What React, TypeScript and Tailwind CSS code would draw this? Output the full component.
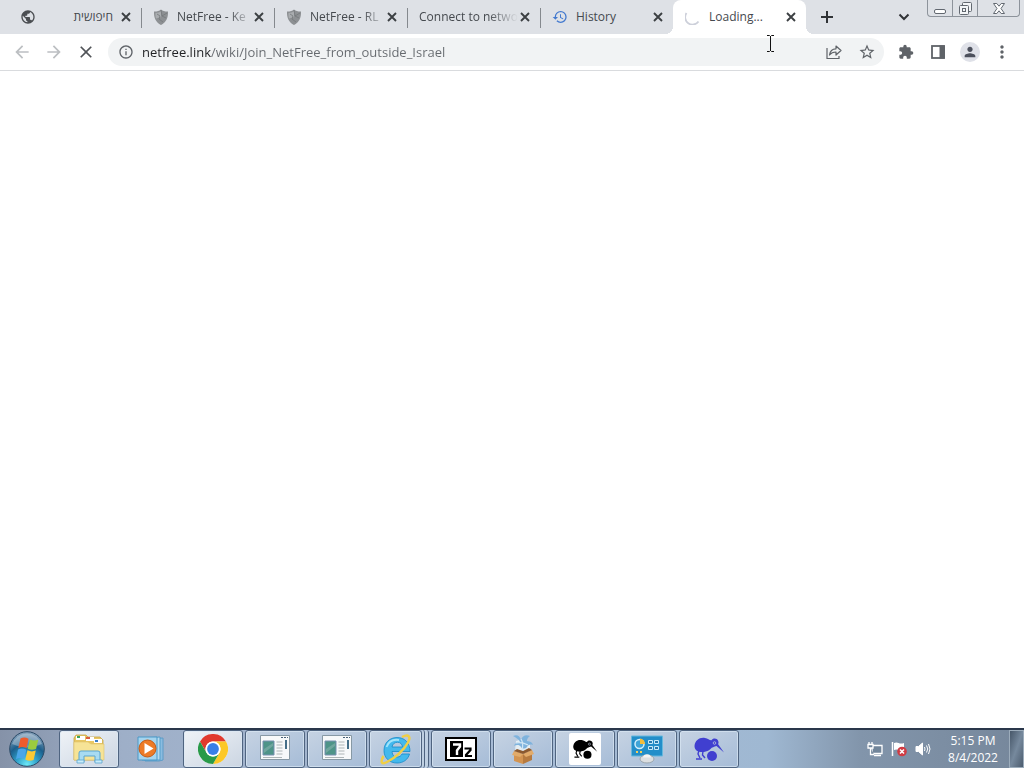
import React from "react";
import {
    MdArrowBack,
    MdArrowForward,
    MdClose,
    MdExtension,
    MdHistory,
    MdInfoOutline,
    MdMoreVert,
    MdPerson,
    MdPublic,
    MdStarBorder,
} from "react-icons/md";

interface TabInfo {
    id: number;
    title: string;
    icon?: React.ReactNode;
    rtl?: boolean;
    active?: boolean;
    divider?: boolean;
    fade?: boolean;
}

const ShieldIcon = () => (
    <svg viewBox="0 0 16 16" className="h-4 w-4">
        <path d="M1 2.500C4 2.600 6 2 8 .500c2 1.500 4 2.100 7 2C15.300 9 13 13.500 8 16 3 13.500.7 9 1 2.500z" fill="#8d9093" />
        <path d="M2.500 4C5 4 6.500 3.300 8 2.300V8L3 9.500C2.500 8 2.400 6 2.500 4z" fill="#a9acaf" />
        <path d="M4 5l3 2-1 3 4 3M14 4L9 7l4 2M8 1l1 6" fill="none" stroke="#75787b" strokeWidth=".8" />
    </svg>
);

const SpinnerIcon = () => (
    <svg viewBox="0 0 16 16" className="h-4 w-4">
        <path d="M1.500 4A7 7 0 0 0 13.500 12.500" fill="none" stroke="#cdd0da" strokeWidth="1.800" />
    </svg>
);

const CrossIcon = () => (
    <svg viewBox="0 0 14 14" className="h-3.5 w-3.5">
        <path d="M3 3l8 8M11 3l-8 8" fill="none" stroke="#3c4043" strokeWidth="1.900" />
    </svg>
);

const tabs: TabInfo[] = [
    { id: 1, title: "חיפושית", icon: <MdPublic className="h-4 w-4 text-[#4b4e52]" />, rtl: true, divider: true },
    { id: 2, title: "NetFree - Ke", icon: <ShieldIcon />, divider: true, fade: true },
    { id: 3, title: "NetFree - RL", icon: <ShieldIcon />, divider: true, fade: true },
    { id: 4, title: "Connect to netwo", divider: true, fade: true },
    { id: 5, title: "History", icon: <MdHistory className="h-4 w-4 text-[#4279cf]" /> },
    { id: 6, title: "Loading...", icon: <SpinnerIcon />, active: true },
];

const Tab = ({ tab }: { tab: TabInfo }) => (
    <div
        className={`relative flex h-[34px] w-[133px] min-w-0 items-center pl-3 pr-2 ${
            tab.active ? "rounded-t-lg bg-white" : ""
        }`}
    >
        <button role="tab" aria-selected={!!tab.active} className="flex h-full min-w-0 flex-1 items-center gap-2">
            {tab.icon && <span className="shrink-0">{tab.icon}</span>}
            <span
                dir={tab.rtl ? "rtl" : "ltr"}
                className={`min-w-0 flex-1 overflow-hidden whitespace-nowrap text-start ${tab.rtl ? "pr-1.5" : ""} ${
                    tab.fade ? "[mask-image:linear-gradient(90deg,#000_70%,transparent)]" : ""
                }`}
            >
                {tab.title}
            </span>
        </button>
        <button aria-label={`Close ${tab.title}`} className="shrink-0">
            <CrossIcon />
        </button>
        {tab.divider && <span className="absolute -right-px top-2 h-5 w-px bg-[#85898e]" />}
        {tab.active && (
            <>
                <span className="absolute -left-2 bottom-0 h-2 w-2 bg-[radial-gradient(circle_at_0_0,transparent_8px,#fff_8px)]" />
                <span className="absolute -right-2 bottom-0 h-2 w-2 bg-[radial-gradient(circle_at_100%_0,transparent_8px,#fff_8px)]" />
            </>
        )}
    </div>
);

const WindowControls = () => (
    <div className="mr-1 flex h-[17px] self-start rounded-b border border-t-0 border-[#8d939b] text-[#626870]">
        <button aria-label="Minimize" className="flex w-[25px] items-center justify-center border-r border-[#8d939b]">
            <svg viewBox="0 0 12 12" className="h-3 w-3" fill="#fff" stroke="currentColor">
                <rect x=".5" y="7.500" width="11" height="4" rx="1.500" />
            </svg>
        </button>
        <button aria-label="Restore" className="flex w-[25px] items-center justify-center border-r border-[#8d939b]">
            <svg viewBox="0 0 13 13" className="h-[13px] w-[13px]" fill="#f3f5f7" stroke="currentColor">
                <rect x="3.500" y=".5" width="9" height="9" rx="1" />
                <rect x=".5" y="3.500" width="9" height="9" rx="1" />
                <rect x="3.500" y="6.500" width="3" height="3" />
            </svg>
        </button>
        <button aria-label="Close window" className="flex w-[41px] items-center justify-center">
            <svg viewBox="0 0 12 11" className="h-[11px] w-3" fill="#fff" stroke="currentColor">
                <path d="M.5.5h3.300L6 3.200 8.200.5h3.300L8 5.500l3.500 5H8.200L6 7.800 3.800 10.500H.5L4 5.500z" />
            </svg>
        </button>
    </div>
);

const TabStrip = () => (
    <div className="flex items-center bg-[#dee1e6] pl-2 text-xs text-[#45494e]">
        <div role="tablist" className="flex min-w-0">
            {tabs.map((tab) => (
                <Tab key={tab.id} tab={tab} />
            ))}
        </div>
        <button aria-label="New tab" className="ml-3 shrink-0">
            <svg viewBox="0 0 18 18" className="h-[18px] w-[18px]">
                <path d="M9 3v12M3 9h12" stroke="#303336" strokeWidth="2" />
            </svg>
        </button>
        <button aria-label="Search tabs" className="ml-auto mr-3.5 shrink-0">
            <svg viewBox="0 0 18 18" className="h-[18px] w-[18px]">
                <path d="M4.500 6.500L9 11l4.500-4.500" fill="none" stroke="#303336" strokeWidth="2" />
            </svg>
        </button>
        <WindowControls />
    </div>
);

const ShareIcon = () => (
    <svg viewBox="0 0 16 16" className="h-4 w-4" fill="none" stroke="#5f6368" strokeWidth="1.200">
        <path d="M1 4v10.500h12V12" />
        <path d="M3.500 11C4 7 6 4.800 10 4.800V2l5 4.500-5 4.500V8C7 8 5 9 3.500 11z" strokeLinejoin="round" />
    </svg>
);

const Toolbar = () => (
    <div className="flex h-[37px] items-center border-b border-[#d9dbde] bg-white text-[#5f6368]">
        <div className="flex gap-3 pl-3">
            <button aria-label="Back">
                <MdArrowBack className="h-5 w-5 text-[#bcbfc2]" />
            </button>
            <button aria-label="Forward">
                <MdArrowForward className="h-5 w-5 text-[#bcbfc2]" />
            </button>
            <button aria-label="Stop">
                <MdClose className="h-5 w-5 text-[#505357]" />
            </button>
        </div>
        <div className="ml-3 flex h-7 min-w-0 flex-1 items-center rounded-full bg-[#f1f3f4] pl-2.5 pr-2">
            <button aria-label="View site information">
                <MdInfoOutline className="h-4 w-4" />
            </button>
            {/* host is darker than the path */}
            <input
                aria-label="Address"
                type="text"
                defaultValue="netfree.link/wiki/Join_NetFree_from_outside_Israel"
                className="ml-2 min-w-0 flex-1 bg-[linear-gradient(90deg,#202124_69px,#65696e_69px)] bg-clip-text pt-0.5 text-[13px] text-transparent caret-black outline-none"
            />
            <button aria-label="Share this page" className="mr-4">
                <ShareIcon />
            </button>
            <button aria-label="Bookmark this page">
                <MdStarBorder className="h-[18px] w-[18px]" />
            </button>
        </div>
        <div className="ml-3.5 mr-3 flex items-center gap-3">
            <button aria-label="Extensions">
                <MdExtension className="h-4 w-4" />
            </button>
            <button aria-label="Side panel" className="ml-0.5 flex w-5 justify-center">
                <svg viewBox="0 0 16 16" className="h-4 w-4">
                    <rect x="2" y="2" width="12" height="12" fill="none" stroke="#5f6368" strokeWidth="1.800" />
                    <path d="M9.500 1.500H15v13H9.500z" fill="#5f6368" />
                </svg>
            </button>
            <button aria-label="Profile" className="flex h-5 w-5 items-center justify-center rounded-full bg-[#dfe1e8]">
                <MdPerson className="h-4 w-4 text-[#4c505c]" />
            </button>
            <button aria-label="Menu">
                <MdMoreVert className="h-5 w-5" />
            </button>
        </div>
    </div>
);

const StartOrb = () => (
    <svg viewBox="0 0 36 36" className="h-9 w-9">
        <defs>
            <radialGradient id="orb" cx=".5" cy=".95" r=".9">
                <stop offset="0" stopColor="#6ceaf8" />
                <stop offset=".35" stopColor="#2f9fc8" />
                <stop offset=".65" stopColor="#1c5f8c" />
                <stop offset="1" stopColor="#7f9db8" />
            </radialGradient>
        </defs>
        <circle cx="18" cy="18" r="17.300" fill="url(#orb)" stroke="#2c4a66" />
        <path d="M3 13A16 16 0 0 1 33 13Q18 20 3 13z" fill="#fff" opacity=".3" />
        <path d="M11.500 7.500q4-2 8 .3L17.600 17q-4-2-8.300.2z" fill="#ee5b2d" />
        <path d="M21 8.500q4 2 8.300.3L27 18q-4.500 1.700-8.300-.3z" fill="#9bcb3e" />
        <path d="M9 18.500q4-2 8.300.2L15.200 28q-4-2-8.200.2z" fill="#4aa6e8" />
        <path d="M18.500 19.300q4 2 8.300.3L24.600 29q-4.500 1.700-8.300-.5z" fill="#fbc934" />
    </svg>
);

const FolderIcon = () => (
    <svg viewBox="0 0 34 32" className="h-8 w-[34px]">
        <path d="M2 27V5l2-3h10l2 2h12l3 3v20z" fill="#e8c763" stroke="#c5a548" strokeWidth=".8" />
        <path d="M4 3h9v4H4zM14 4h8v4h-8zM22 6h8v4h-8z" fill="#fff" />
        <path d="M5 3h3v2H5z" fill="#39a35b" />
        <path d="M14 4h4v2h-4z" fill="#d95b40" />
        <path d="M23 7h3v2h-3z" fill="#3d80c8" />
        <path d="M2 9h14l3 2h13v16H2z" fill="#f6e396" stroke="#dfc36b" strokeWidth=".6" />
        <path d="M7 29V20q0-2 2-2h17q2 0 2 2v9h-5v-6H12v6z" fill="#a8dbf2" stroke="#5ba5cf" />
        <path d="M5 27h7v3H5zM23 27h7v3h-7z" fill="#c9edfa" stroke="#5ba5cf" strokeWidth=".8" />
    </svg>
);

const MediaIcon = () => (
    <svg viewBox="0 0 28 26" className="h-[26px] w-7">
        <path d="M8 3l18-1v22l-4 1H8z" fill="#8bbce0" stroke="#5d9cc8" />
        <path d="M5 2l18-1v23H5z" fill="#b5dbf0" stroke="#559dca" />
        <path d="M1 1h19v23H1z" fill="#a5d4ee" stroke="#4b98c7" />
        <circle cx="10.500" cy="12.500" r="8.500" fill="#ed7b27" stroke="#c55a13" />
        <path d="M7.500 7v11l9-5.500z" fill="#fff" />
    </svg>
);

const ChromeIcon = () => (
    <svg viewBox="0 0 30 30" className="h-[30px] w-[30px]">
        <circle cx="15" cy="15" r="15" fill="#fff" />
        <path d="M2 7.500A15 15 0 0 1 28 7.500H15A7.500 7.500 0 0 0 8.500 18.750z" fill="#e1392d" />
        <path d="M28 7.500A15 15 0 0 1 15 30L21.500 18.750A7.500 7.500 0 0 0 15 7.500z" fill="#fcc827" />
        <path d="M15 30A15 15 0 0 1 2 7.500L8.500 18.750A7.500 7.500 0 0 0 21.500 18.750z" fill="#299a49" />
        <circle cx="15" cy="15" r="7.500" fill="#fff" />
        <circle cx="15" cy="15" r="5.900" fill="#397fe8" />
    </svg>
);

const AppWindowIcon = () => (
    <svg viewBox="0 0 30 26" className="mb-0.5 h-[26px] w-[30px]">
        <path d="M.5.500h29v24H.5z" fill="#f7f9fa" stroke="#8799a5" />
        <path d="M3 6h11v14H3z" fill="#4e9488" stroke="#7990b1" />
        <path d="M4 14l9-6v3l-9 7z" fill="#70a69e" />
        <path d="M16.500 7h6M16.500 10h6M16.500 13h6M16.500 16h6M16.500 19h6M3 22.500h19" stroke="#aeb5b7" />
        <path d="M21 2.500h2M24 2.500h2M27 2.500h1" stroke="#476077" />
        <path d="M25 5h2v9h-2z" fill="#456f89" />
    </svg>
);

const ExplorerIcon = () => (
    <svg viewBox="0 0 32 32" className="h-8 w-8">
        <path
            d="M29.500 21C28 26.500 23.500 30 17 30 9.500 30 4 25 4 17.500S9.500 4.500 17 4.500 30 9.500 30 18.500H12c.5 4 2 5.500 5.500 5.500 2 0 3.500-1 4.500-3zM12 14h10.500c-.3-3-2-4.700-5-4.700S12.500 11 12 14z"
            fill="#43b9ed"
            stroke="#168ac8"
            strokeWidth=".8"
        />
        <path d="M6.500 14C8.500 8.500 13 6 19 7" fill="none" stroke="#a2e4fa" strokeWidth="1.800" />
        <path
            d="M3.500 23C0 29 1.500 32 7 29c8-4 17-12 21-19.500C31 4 29 .5 22 4"
            fill="none"
            stroke="#f0cf45"
            strokeWidth="2.500"
        />
    </svg>
);

const SevenZipIcon = () => (
    <svg viewBox="0 0 32 24" className="h-6 w-8">
        <path d="M1 1h30v22H1z" fill="#fff" stroke="#000" strokeWidth="2" />
        <path d="M5 4h13v16H5z" fill="#000" />
        <path d="M8 7.500h7v2l-3 4V18" fill="none" stroke="#fff" strokeWidth="2.400" />
        <path d="M19.500 11.500h6v1.500L21 18v1h6" fill="none" stroke="#000" strokeWidth="2.200" />
    </svg>
);

const BoxIcon = () => (
    <svg viewBox="0 0 24 32" className="h-8 w-6">
        <path d="M5 8l7-2 7 3v10l-7 2-8-3z" fill="#e4edf3" />
        <path d="M2 3c4-2 7 0 8 4 1-4 5-6 9-4-2 1-3 3-3 5 3 0 5 1 6 4-3-1-5 0-6 2-2 2-5 2-6 0-2-3-5-2-7-1 1-3 3-4 6-4-1-3-4-4-7-6z" fill="#7fb3dd" />
        <path d="M10 6c2 3 2 7 1 11M5 10c4-1 8 0 12 2" fill="none" stroke="#d3e7f5" strokeWidth="1.200" />
        <path d="M3 18l9 3v10l-9-3z" fill="#d39451" />
        <path d="M12 21l9-4v10l-9 4z" fill="#b67a3f" />
        <path d="M3 18l9 3-3 3-8-2zM12 21l9-4 2 4-8 3z" fill="#e2ab6a" />
        <path d="M3 18l3-2 6 2 6-3 3 2-9 4z" fill="#8b592f" />
    </svg>
);

const Kiwi = ({ className }: { className: string }) => (
    <svg viewBox="0 0 32 26" className={className}>
        <path
            d="M1.500 10C2 4 7 1 12 2c3 .6 4.500 2.500 6.500 2.300C20 1.500 25 2 25.500 6c0 1 0 1.600-.5 2L31 16.500 23.500 10C21 11 19 11 17.500 13c-2 2-4 2.500-6.500 3-5 .5-9.500-1-9.500-6z"
            fill="currentColor"
        />
        <path
            d="M6 14l-1 4 2 4M3 23h6M10 15l-.500 4 2.500 3"
            fill="none"
            stroke="currentColor"
            strokeWidth="1.400"
        />
        <circle cx="19" cy="20" r="5" fill="currentColor" />
        <circle cx="21.500" cy="7" r="1.300" fill="none" stroke="#c4cbe0" strokeWidth=".7" />
    </svg>
);

const ControlPanelIcon = () => (
    <svg viewBox="0 0 32 30" className="h-[30px] w-8">
        <path d="M.5 2h31v20H.5z" fill="#238ec9" stroke="#66b8dd" />
        <circle cx="8.500" cy="10" r="4.500" fill="#3fa4d7" stroke="#d3effb" strokeWidth="1.500" />
        <path d="M9 10V4.500a5.500 5.500 0 0 1 5 5.500z" fill="#f5bd3a" />
        <path d="M17.500 6.500h4v3h-4zM23.500 6.500h4v3h-4zM17.500 12.500h4v3h-4zM23.500 12.500h4v3h-4z" fill="#2779ad" stroke="#c6eafa" />
        <path d="M5 18h2M9 18h2" stroke="#f5cf56" strokeWidth="2" />
        <ellipse cx="16" cy="25" rx="7" ry="4" fill="#dcdfe1" stroke="#9ba6ad" />
        <path d="M12 23.500c0-4.500 8-4.500 8 0z" fill="#f4f4f4" />
    </svg>
);

interface AppButton {
    label: string;
    icon: React.ReactNode;
    look?: "bright" | "plain" | "stacked";
}

const apps: AppButton[] = [
    { label: "Windows Explorer", icon: <FolderIcon />, look: "bright" },
    { label: "Media Player", icon: <MediaIcon />, look: "plain" },
    { label: "Google Chrome", icon: <ChromeIcon />, look: "bright" },
    { label: "Application", icon: <AppWindowIcon /> },
    { label: "Application 2", icon: <AppWindowIcon /> },
    { label: "Internet Explorer", icon: <ExplorerIcon />, look: "stacked" },
    { label: "7-Zip", icon: <SevenZipIcon /> },
    { label: "Installer", icon: <BoxIcon /> },
    {
        label: "Kiwi",
        icon: (
            <span className="flex h-8 w-8 items-center justify-center rounded-xs bg-white">
                <Kiwi className="h-[22px] w-[26px] text-black" />
            </span>
        ),
    },
    { label: "Control Panel", icon: <ControlPanelIcon /> },
    { label: "Kiwi Blue", icon: <Kiwi className="h-[26px] w-8 text-[#403fd0]" /> },
];

const frame = "border border-[#4f6480] rounded-[3px] shadow-[inset_0_0_0_1px_#dbe8f5aa]";
const looks = {
    normal: `w-[60px] bg-linear-to-br from-[#c6d3e3] to-[#a6bcd7] ${frame}`,
    bright: `w-[60px] bg-linear-to-br from-[#eff3f7] to-[#cbd5e2] ${frame}`,
    plain: "w-[60px]",
    stacked: `w-[53px] bg-linear-to-br from-[#c6d3e3] to-[#a6bcd7] ${frame}`,
};

const Tray = () => (
    <div className="flex items-center gap-2 text-white">
        <button aria-label="Network">
            <svg viewBox="0 0 16 16" className="h-4 w-4" fill="#71859a" stroke="#fff" strokeWidth="1.300">
                <path d="M5 4.500h10v8H5zM7 14.500h7" />
                <path d="M1 3.500h5V7H1zM2 1v2M5 1v2M3.500 7v6.500H7" />
            </svg>
        </button>
        <button aria-label="Action Center">
            <svg viewBox="0 0 16 16" className="h-4 w-4">
                <path d="M1.500 1v14" stroke="#fff" strokeWidth="1.500" />
                <path d="M3 2c4-2 5 2 10 0v7c-5 2-6-2-10 0z" fill="#fff" />
                <circle cx="11" cy="10.500" r="4.800" fill="#d03b43" />
                <path d="M9 8.500l4 4M13 8.500l-4 4" stroke="#fff" strokeWidth="1.500" />
            </svg>
        </button>
        <button aria-label="Volume">
            <svg viewBox="0 0 16 16" className="h-4 w-4" fill="none" stroke="#fff">
                <path d="M1 5.500h2.500L7.500 2v12l-4-3.500H1z" fill="#fff" />
                <path d="M9.500 6q1 2 0 4M11.500 4.500q2.500 3.500 0 7M13.500 3q3 5 0 10" />
            </svg>
        </button>
    </div>
);

const Taskbar = () => (
    <div className="flex h-10 shrink-0 items-center border-t-2 border-[#2a374b] bg-[linear-gradient(90deg,#8592a8,#9eafc8_12%,#a8bcd6_50%,#9fb8d2_75%,#8295ab_84%,#76879b)]">
        <button aria-label="Start" className="ml-[9px] mr-3.5 shrink-0">
            <StartOrb />
        </button>
        <div className="flex h-full min-w-0 gap-0.5">
            {apps.map((app) => (
                <div key={app.label} className="flex h-full min-w-0">
                    <button
                        aria-label={app.label}
                        className={`flex h-full min-w-0 items-center justify-center ${looks[app.look ?? "normal"]}`}
                    >
                        {app.icon}
                    </button>
                    {app.look === "stacked" && (
                        <>
                            <span className="h-full w-[3px] rounded-r-[3px] border-r border-[#4f6480] bg-[#bfd0e2]" />
                            <span className="h-full w-1 rounded-r-[3px] border-r border-[#4f6480] bg-[#bfd0e2]" />
                        </>
                    )}
                </div>
            ))}
        </div>
        <div className="ml-auto flex h-full shrink-0 items-center">
            <Tray />
            <div className="ml-3 mr-1.5 w-[60px] text-center text-xs leading-[17px] text-white">
                <p>5:15 PM</p>
                <p>8/4/2022</p>
            </div>
            <button
                aria-label="Show desktop"
                className="h-full w-[15px] border border-[#9cacbb] bg-linear-to-br from-[#475769] via-[#76899d] to-[#4c5c6e]"
            />
        </div>
    </div>
);

const TextCursor = () => (
    <svg viewBox="0 0 9 17" className="pointer-events-none absolute left-[766px] top-[35px] h-[17px] w-[9px]">
        <path d="M1 .500h2.500l1 1 1-1H8M1 16.500h2.500l1-1 1 1H8M4.500 1v15" fill="none" stroke="#111" />
    </svg>
);

export default function App() {
    return (
        <div className="relative flex min-h-screen flex-col bg-white font-['Open_Sans','Noto_Sans',sans-serif]">
            <TabStrip />
            <Toolbar />
            <main className="flex-1 bg-white" />
            <Taskbar />
            <TextCursor />
        </div>
    );
}
